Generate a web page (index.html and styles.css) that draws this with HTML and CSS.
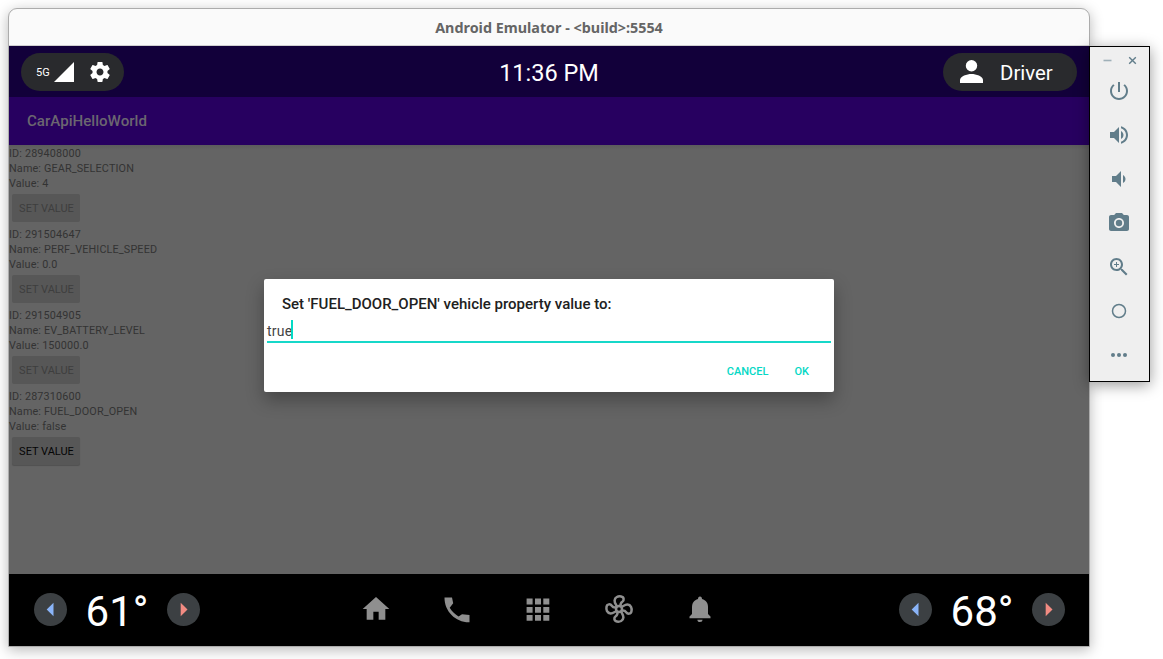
FILE: index.html
```html
<!DOCTYPE html>
<html lang="en">
<head>
<meta charset="utf-8">
<title>Android Emulator</title>
<link rel="stylesheet" href="styles.css">
</head>
<body>
<main class="desktop">
  <section class="window">
    <header class="titlebar"><span>Android Emulator - &lt;build&gt;:5554</span></header>
    <div class="statusbar">
      <div class="pill pill-left">
        <span class="network">5G</span>
        <svg class="signal" width="20" height="20" viewBox="0 0 20 20"><path d="M20 0v20H0z" fill="#fff"/></svg>
        <svg class="gear" width="24" height="24" viewBox="0 0 24 24"><path fill="#fff" d="M19.43 12.98c.04-.32.07-.64.07-.98s-.03-.66-.07-.98l2.11-1.65c.19-.15.24-.42.12-.64l-2-3.46c-.12-.22-.39-.3-.61-.22l-2.49 1c-.52-.4-1.08-.73-1.69-.98l-.38-2.65C14.46 2.18 14.25 2 14 2h-4c-.25 0-.46.18-.49.42l-.38 2.65c-.61.25-1.17.59-1.69.98l-2.49-1c-.23-.09-.49 0-.61.22l-2 3.46c-.13.22-.07.49.12.64l2.11 1.65c-.04.32-.07.65-.07.98s.03.66.07.98l-2.11 1.65c-.19.15-.24.42-.12.64l2 3.46c.12.22.39.3.61.22l2.49-1c.52.4 1.08.73 1.69.98l.38 2.65c.03.24.24.42.49.42h4c.25 0 .46-.18.49-.42l.38-2.65c.61-.25 1.17-.59 1.69-.98l2.49 1c.23.09.49 0 .61-.22l2-3.46c.12-.22.07-.49-.12-.64l-2.11-1.65zM12 15.500c-1.930 0-3.500-1.570-3.500-3.500s1.570-3.500 3.500-3.500 3.500 1.570 3.500 3.500-1.570 3.500-3.500 3.500z"/></svg>
      </div>
      <span class="clock">11:36 PM</span>
      <div class="pill pill-right">
        <svg width="23" height="23" viewBox="0 0 23 23" fill="#fff"><circle cx="11.500" cy="5.800" r="5.700"/><path d="M0 23v-3c0-3.800 7-6 11.500-6S23 16.200 23 20v3z"/></svg>
        <span class="driver">Driver</span>
      </div>
    </div>
    <div class="appbar"><span>CarApiHelloWorld</span></div>
    <div class="content">
      <div class="property"><p>ID: 289408000</p><p>Name: GEAR_SELECTION</p><p>Value: 4</p><button class="set" disabled>SET VALUE</button></div>
      <div class="property"><p>ID: 291504647</p><p>Name: PERF_VEHICLE_SPEED</p><p>Value: 0.0</p><button class="set" disabled>SET VALUE</button></div>
      <div class="property"><p>ID: 291504905</p><p>Name: EV_BATTERY_LEVEL</p><p>Value: 150000.0</p><button class="set" disabled>SET VALUE</button></div>
      <div class="property"><p>ID: 287310600</p><p>Name: FUEL_DOOR_OPEN</p><p>Value: false</p><button class="set enabled">SET VALUE</button></div>
    </div>
    <nav class="navbar">
      <div class="climate">
        <span class="round"><svg width="33" height="33" viewBox="0 0 33 33"><path d="M19.500 9.800v13.400L12.700 16.500z" fill="#8ab4f8"/></svg></span>
        <span class="temp">61°</span>
        <span class="round"><svg width="33" height="33" viewBox="0 0 33 33"><path d="M13.700 9.800v13.400l6.800-6.700z" fill="#f28b82"/></svg></span>
      </div>
      <div class="shortcuts">
        <svg width="32" height="32" viewBox="0 0 24 24"><path d="M10 20v-6h4v6h5v-8h3L12 3 2 12h3v8z"/></svg>
        <svg width="32" height="32" viewBox="0 0 32 32"><path d="M3.500 4.500H11L12.200 10.200 8.700 14.700C11 18.700 14.200 21.300 17.600 23.400L21 21.300 28.500 22V29.300C15 29.700 3.300 18.500 3.500 4.500z"/></svg>
        <svg width="32" height="32" viewBox="0 0 32 32"><path d="M4.600 5.600h6v5.800h-6zM13 5.600h6v5.800h-6zM21.300 5.600h6v5.800h-6zM4.600 13.900h6v5.800h-6zM13 13.900h6v5.800h-6zM21.300 13.900h6v5.800h-6zM4.600 22h6v5.800h-6zM13 22h6v5.800h-6zM21.300 22h6v5.800h-6z"/></svg>
        <svg width="32" height="32" viewBox="0 0 32 32"><g class="fan"><circle cx="16" cy="16" r="3"/><path id="blade" d="M13.900 13.600C13.300 11.800 11.500 10 11.600 7.600C11.800 4 15.200 3 18.100 3.500C21.200 4 21.300 7.400 19.300 8.800C17.500 10 17.300 11.500 17.600 13.300"/><use href="#blade" transform="rotate(90 16 16)"/><use href="#blade" transform="rotate(180 16 16)"/><use href="#blade" transform="rotate(270 16 16)"/></g></svg>
        <svg width="32" height="32" viewBox="0 0 32 32"><path d="M16 3.500c1.400 0 2 1 2 2.400 4 1 6 4.200 6 8.100v7l2.500 2.600v1.600h-21v-1.600L8 21v-7c0-3.900 2-7.100 6-8.100 0-1.400.600-2.400 2-2.400zM13.400 26.700h5.200a2.600 2.300 0 0 1-5.200 0z"/></svg>
      </div>
      <div class="climate">
        <span class="round"><svg width="33" height="33" viewBox="0 0 33 33"><path d="M19.500 9.800v13.400L12.700 16.500z" fill="#8ab4f8"/></svg></span>
        <span class="temp">68°</span>
        <span class="round"><svg width="33" height="33" viewBox="0 0 33 33"><path d="M13.700 9.800v13.400l6.800-6.700z" fill="#f28b82"/></svg></span>
      </div>
    </nav>
    <div class="dialog">
      <h1>Set 'FUEL_DOOR_OPEN' vehicle property value to:</h1>
      <div class="field"><span>true</span><i class="caret"></i></div>
      <div class="actions"><span class="cancel">CANCEL</span><span class="ok">OK</span></div>
    </div>
  </section>
  <aside class="toolbar">
    <div class="controls">
      <svg width="9" height="9" viewBox="0 0 9 9"><path d="M.5 4.500h8" stroke="#9fb0b8" stroke-width="1.600"/></svg>
      <svg width="9" height="9" viewBox="0 0 9 9"><path d="M1.200 1.200l6.600 6.600M7.800 1.200L1.200 7.800" stroke="#617d8a" stroke-width="1.400"/></svg>
    </div>
    <svg class="tool" viewBox="0 0 24 24"><path d="M13 3h-2v10h2V3zm4.830 2.170l-1.420 1.420C17.990 7.860 19 9.810 19 12c0 3.870-3.130 7-7 7s-7-3.130-7-7c0-2.190 1.010-4.140 2.580-5.420L6.170 5.170C4.230 6.820 3 9.260 3 12c0 4.970 4.030 9 9 9s9-4.030 9-9c0-2.740-1.230-5.180-3.170-6.830z"/></svg>
    <svg class="tool" viewBox="0 0 24 24"><path d="M3 9v6h4l5 5V4L7 9H3zm13.500 3c0-1.770-1.020-3.290-2.500-4.030v8.050c1.480-.73 2.500-2.250 2.500-4.020zM14 3.230v2.060c2.890.86 5 3.540 5 6.710s-2.110 5.850-5 6.710v2.060c4.010-.91 7-4.490 7-8.770s-2.990-7.860-7-8.770z"/></svg>
    <svg class="tool" viewBox="0 0 24 24"><path d="M18.500 12c0-1.770-1.020-3.290-2.500-4.030v8.050c1.480-.73 2.500-2.250 2.500-4.020zM5 9v6h4l5 5V4L9 9H5z"/></svg>
    <svg class="tool" viewBox="0 0 24 24"><circle cx="12" cy="12" r="3.200"/><path d="M9 2L7.170 4H4c-1.100 0-2 .9-2 2v12c0 1.100.9 2 2 2h16c1.100 0 2-.9 2-2V6c0-1.100-.9-2-2-2h-3.170L15 2H9zm3 15c-2.760 0-5-2.240-5-5s2.240-5 5-5 5 2.240 5 5-2.240 5-5 5z"/></svg>
    <svg class="tool" viewBox="0 0 24 24"><path d="M15.500 14h-.79l-.28-.27C15.410 12.590 16 11.110 16 9.500 16 5.910 13.090 3 9.500 3S3 5.910 3 9.500 5.910 16 9.500 16c1.610 0 3.090-.59 4.230-1.570l.27.28v.79l5 4.990L20.490 19l-4.990-5zm-6 0C7.010 14 5 11.990 5 9.500S7.010 5 9.500 5 14 7.010 14 9.500 11.990 14 9.500 14zm2.500-4h-2v2H9v-2H7V9h2V7h1v2h2v1z"/></svg>
    <svg class="tool" viewBox="0 0 24 24"><circle cx="12" cy="12" r="6.500" fill="none" stroke="#617d8a" stroke-width="1.500"/></svg>
    <svg class="tool" viewBox="0 0 24 24"><circle cx="6" cy="12" r="2"/><circle cx="12" cy="12" r="2"/><circle cx="18" cy="12" r="2"/></svg>
  </aside>
</main>
</body>
</html>
```
FILE: styles.css
```css
* { box-sizing: border-box; }
body { margin: 0; background: #fff; font-family: Roboto, sans-serif; overflow: hidden; }
svg { display: block; flex: none; }
.desktop { display: flex; align-items: flex-start; width: 1163px; height: 659px; padding: 8px; overflow: hidden; }
.window { position: relative; flex: none; width: 1082px; height: 639px; border: 1px solid #acacac; border-radius: 9px 9px 0 0; background: #fafafa; box-shadow: 0 3px 14px rgba(0,0,0,.28); }
.titlebar { height: 37px; border-bottom: 1px solid #d0d0d0; display: flex; align-items: center; justify-content: center; font: bold 14.35px "Noto Sans", sans-serif; color: #656565; }
.statusbar { height: 51px; background: #12003a; display: grid; grid-template-columns: 1fr auto 1fr; align-items: center; padding: 0 12px; color: #fff; }
.pill { height: 38px; border-radius: 19px; background: #292a2d; display: flex; align-items: center; }
.pill-left { width: 103px; padding-left: 15px; }
.network { font-size: 11px; width: 18px; padding-top: 1px; }
.gear { margin-left: 14px; }
.clock { font-size: 23.5px; padding-top: 2px; }
.pill-right { width: 134px; justify-self: end; padding-left: 17px; }
.driver { font-size: 20.4px; margin-left: 17px; padding-top: 2px; }
.appbar { height: 48px; background: #270060; display: flex; align-items: center; padding-left: 18px; font-size: 15.1px; font-weight: 500; color: #6b6670; }
.content { height: 429px; padding-top: 1px; background: linear-gradient(#5c5c5c, #646464 5px); }
.property { height: 81px; font-size: 10.8px; line-height: 15px; letter-spacing: .15px; color: #333; }
.property p { margin: 0; }
.set { display: block; margin: 3px 0 0 3px; width: 68px; height: 28px; border: 0; border-radius: 2px; padding: 0 0 0 1px; background: #575757; color: #3e3e3e; font: 450 11px Roboto, sans-serif; }
.enabled { color: #050505; box-shadow: 0 1px 1px rgba(0,0,0,.2); }
.navbar { height: 72px; background: #000; display: flex; justify-content: space-between; align-items: center; padding: 0 24px 1px 25px; }
.climate { width: 166px; display: flex; justify-content: space-between; align-items: center; }
.round { width: 33px; height: 33px; border-radius: 50%; background: #3c4043; }
.temp { color: #fff; font-size: 42px; line-height: 50px; padding-top: 5px; }
.shortcuts { display: flex; gap: 49px; margin: 0 24px 2px 0; fill: #8f8f8f; }
.fan { fill: none; stroke: #8f8f8f; stroke-width: 2.500; }
.dialog { position: absolute; left: 255px; top: 270px; width: 570px; height: 113px; padding: 16px 3px 0; background: #fff; border-radius: 2px; box-shadow: 0 8px 18px rgba(0,0,0,.3); }
.dialog h1 { margin: 0 0 0 15px; font-size: 15px; line-height: 18px; font-weight: 500; color: #212121; }
.field { display: flex; align-items: center; height: 30px; padding-top: 8px; border-bottom: 2px solid #16d8c9; font-size: 14px; color: #444; letter-spacing: .25px; }
.caret { width: 2px; height: 19px; background: #03dac5; margin-top: -3px; margin-left: -1px; }
.actions { display: flex; justify-content: flex-end; gap: 26px; padding: 22px 22px 0 0; font-size: 11px; line-height: 14px; font-weight: 500; color: #05d8c5; }
.toolbar { position: relative; flex: none; width: 61px; height: 336px; margin: 38px 0 0 -1px; padding-right: 1px; border: 1px solid #000; background: #efefef; box-shadow: 0 3px 14px rgba(0,0,0,.4); display: flex; flex-direction: column; align-items: center; fill: #617d8a; }
.controls { display: flex; flex: none; gap: 16px; height: 32px; padding: 9px 0 0 1px; }
.tool { width: 24px; height: 24px; margin-bottom: 20px; }
.controls + .tool { margin-top: 0; }
```
